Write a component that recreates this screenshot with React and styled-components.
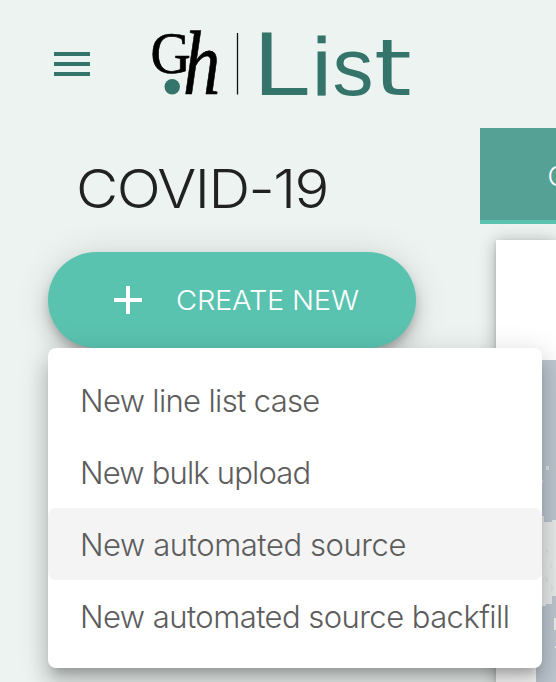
import React from "react";
import styled, { createGlobalStyle } from "styled-components";

const GlobalStyle = createGlobalStyle`
  * { box-sizing: border-box; }
  body { margin: 0; background: #ecf3f0; overflow: hidden; }
`;

const Page = styled.div`
  width: 556px;
  height: 682px;
  overflow: hidden;
  display: grid;
  grid-template-rows: 128px 1fr;
  grid-template-columns: 480px 76px;
  background: #ecf3f0;
  font-family: Inter, "Liberation Sans", sans-serif;
  font-weight: 300;
`;

const Header = styled.header`
  grid-column: 1 / -1;
  display: flex;
  align-items: center;
  padding-left: 54px;
`;

const MenuButton = styled.div`
  display: flex;
  flex-direction: column;
  gap: 6px;
  width: 36px;
`;

const MenuLine = styled.span`
  height: 4px;
  background: #35746a;
`;

const Logo = styled.svg`
  margin-left: 56px;
  display: block;
  overflow: visible;
`;

const Sidebar = styled.aside`
  position: relative;
  z-index: 1;
  padding-left: 48px;
`;

const Title = styled.h1`
  margin: 0;
  height: 124px;
  padding: 28px 0 0 28px;
  font-size: 54px;
  line-height: 66px;
  font-weight: 300;
  letter-spacing: -1.4px;
  color: #212121;
  white-space: nowrap;
`;

const WideText = styled.span`
  display: inline-block;
  transform: scaleX(1.073);
  transform-origin: 0 50%;
`;

const CreateButton = styled.button`
  display: flex;
  align-items: center;
  width: 368px;
  height: 96px;
  padding: 0 0 0 66px;
  gap: 34px;
  border: 0;
  border-radius: 48px;
  background: #5ac3b0;
  color: #fff;
  font: 300 27px/40px Inter, "Liberation Sans", sans-serif;
  letter-spacing: -0.2px;
  white-space: nowrap;
  box-shadow: 0 6px 10px -2px rgba(0, 0, 0, 0.2),
    0 12px 20px rgba(0, 0, 0, 0.14), 0 2px 36px rgba(0, 0, 0, 0.12);
`;

const CreateLabel = styled(WideText)`
  padding-top: 2px;
`;

const Menu = styled.ul`
  position: absolute;
  left: 48px;
  top: 220px;
  width: 494px;
  height: 320px;
  margin: 0;
  padding: 16px 0;
  list-style: none;
  border-radius: 8px;
  background: #fff;
  box-shadow: 0 10px 10px -6px rgba(0, 0, 0, 0.2),
    0 16px 20px 2px rgba(0, 0, 0, 0.14), 0 6px 28px 4px rgba(0, 0, 0, 0.12);
`;

const MenuItem = styled.li`
  height: 72px;
  padding-left: 32px;
  border-radius: 8px;
  background: ${(p) => (p.$active ? "#f4f4f4" : "transparent")};
  font-size: 31px;
  line-height: 74px;
  letter-spacing: ${(p) => p.$spacing}px;
  color: #5d5d5d;
  white-space: nowrap;
`;

const Main = styled.main`
  display: flex;
  flex-direction: column;
  gap: 16px;
  min-width: 0;
`;

const Tab = styled.div`
  height: 96px;
  padding-left: 67.5px;
  border-bottom: 4px solid #5ac3b0;
  background: #56a196;
  color: #fff;
  font-size: 27px;
  line-height: 97px;
  overflow: hidden;
`;

const Card = styled.section`
  flex: 1;
  margin-left: 16px;
  padding: 120px 0 0 40px;
  background: #fff;
  box-shadow: 0 4px 2px -2px rgba(0, 0, 0, 0.2),
    0 2px 4px rgba(0, 0, 0, 0.14), 0 2px 16px rgba(0, 0, 0, 0.3);
`;

const MapView = styled.svg`
  display: block;
`;

const items = [
  { label: "New line list case", spacing: -0.65 },
  { label: "New bulk upload", spacing: -0.82 },
  { label: "New automated source", spacing: -0.43, active: true },
  { label: "New automated source backfill", spacing: -0.55 },
];

export default function App() {
  return (
    <>
      <GlobalStyle />
      <Page>
        <Header>
          <MenuButton>
            <MenuLine />
            <MenuLine />
            <MenuLine />
          </MenuButton>
          <Logo width="280" height="128" viewBox="146 0 280 128">
            <g fontFamily="Liberation Serif, serif" fill="#000" stroke="#000" strokeWidth="0.7">
              <text transform="translate(150.500 73.200) scale(0.93 1)" fontSize="60">G</text>
              <text transform="translate(183 94) scale(0.82 1)" fontSize="91" fontStyle="italic">h</text>
            </g>
            <circle cx="172.2" cy="86.8" r="7.7" fill="#35746a" />
            <path d="M237.500 33V94.500" stroke="#111" strokeWidth="1.3" />
            <g fontFamily="Liberation Sans, sans-serif" fontWeight="400" fill="#35746a">
              <text transform="translate(253.500 94.500) scale(1.13 1)" fontSize="91">L</text>
              <text x="312.500" y="94.500" fontSize="82" stroke="#35746a" strokeWidth="0.8">i</text>
              <text x="332.500" y="94.500" fontSize="82">s</text>
              <text transform="translate(374 94.500) scale(1.23 1)" fontFamily="DejaVu Sans, sans-serif" fontSize="78">t</text>
            </g>
          </Logo>
        </Header>
        <Sidebar>
          <Title>
            <WideText>COVID-19</WideText>
          </Title>
          <CreateButton>
            <svg width="28" height="28" viewBox="0 0 28 28">
              <path d="M14 0V28M0 14H28" stroke="#fff" strokeWidth="4" />
            </svg>
            <CreateLabel>CREATE NEW</CreateLabel>
          </CreateButton>
          <Menu>
            {items.map((i) => (
              <MenuItem key={i.label} $active={i.active} $spacing={i.spacing}>
                {i.label}
              </MenuItem>
            ))}
          </Menu>
        </Sidebar>
        <Main>
          <Tab>C</Tab>
          <Card>
            <MapView width="20" height="322" viewBox="0 0 20 322">
              <rect width="20" height="322" fill="#bec8d1" />
              <path d="M0 156H8V162H16V160H20V236H16V244H10V246H0Z" fill="#e9edec" />
              <path d="M10 188l3 3-3 3zM14 202l3 4-2 3zM9 216l4 3-3 4zM15 224l3 3-3 5z" fill="#dce5e4" />
              <path d="M10 106h3v4h-3zM6 120h1v3h-1z" fill="#dfe4e7" />
              <path d="M18 258h2v12h-2zM19 286h1v2h-1z" fill="#edf0f1" />
            </MapView>
          </Card>
        </Main>
      </Page>
    </>
  );
}
